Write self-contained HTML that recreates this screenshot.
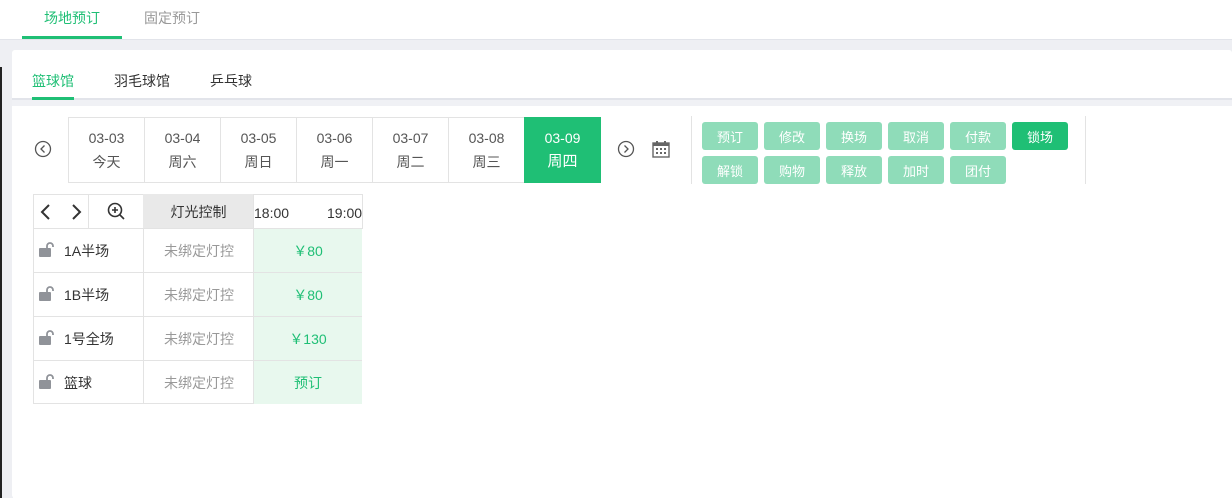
<!DOCTYPE html><html><head><meta charset="utf-8"><style>
*{margin:0;padding:0;box-sizing:border-box}
body{width:1232px;height:498px;overflow:hidden;background:#fff;font-family:"Liberation Sans","Noto Sans CJK SC",sans-serif;font-size:14px;color:#333;position:relative}
.a{position:absolute}
.c{display:flex;align-items:center;justify-content:center}
.d{border:1px solid #e3e3e3;flex-direction:column;text-align:center;line-height:24px;font-size:14px;color:#555}
.b{width:56px;height:28px;border-radius:3px;background:#8fdcb9;color:#fff;font-size:13px}
.t{border:1px solid #e3e3e3}
</style></head><body>
<div class="a" style="left:0;top:39px;width:1232px;height:459px;background:#eeeff3;border-top:1px solid #e2e4ea"></div>
<div class="a" style="left:0;top:67px;width:2px;height:431px;background:#222"></div>
<div class="a" style="left:22px;top:8px;width:100px;text-align:center;color:#1fbf75">场地预订</div>
<div class="a" style="left:22px;top:36px;width:100px;height:3px;background:#1fbf75"></div>
<div class="a" style="left:122px;top:8px;width:100px;text-align:center;color:#999">固定预订</div>
<div class="a" style="left:12px;top:50px;width:1220px;height:448px;background:#fff;border-radius:3px"></div>
<div class="a" style="left:12px;top:98px;width:1220px;height:8px;background:#f0f1f5;border-top:2px solid #e2e4ea"></div>
<div class="a" style="left:13px;top:106px;width:1219px;height:392px;background:#fff"></div>
<div class="a" style="left:32px;top:71px;color:#1fbf75">篮球馆</div>
<div class="a" style="left:32px;top:97px;width:42px;height:3px;background:#1fbf75"></div>
<div class="a" style="left:114px;top:71px">羽毛球馆</div>
<div class="a" style="left:210px;top:71px">乒乓球</div>
<svg class="a" style="left:34px;top:140px" width="18" height="18"><circle cx="9" cy="9" r="7.5" fill="none" stroke="#555" stroke-width="1.3"/><path d="M10.5 5.5L7 9l3.5 3.5" fill="none" stroke="#555" stroke-width="1.3"/></svg>
<div class="a c d" style="left:68px;top:117px;width:77px;height:66px">03-03<br>今天</div>
<div class="a c d" style="left:144px;top:117px;width:77px;height:66px">03-04<br>周六</div>
<div class="a c d" style="left:220px;top:117px;width:77px;height:66px">03-05<br>周日</div>
<div class="a c d" style="left:296px;top:117px;width:77px;height:66px">03-06<br>周一</div>
<div class="a c d" style="left:372px;top:117px;width:77px;height:66px">03-07<br>周二</div>
<div class="a c d" style="left:448px;top:117px;width:77px;height:66px">03-08<br>周三</div>
<div class="a c d" style="left:524px;top:117px;width:77px;height:66px;background:#1fbf75;color:#fff;border-color:#1fbf75">03-09<br><span style="font-size:15px">周四</span></div>
<svg class="a" style="left:617px;top:140px" width="18" height="18"><circle cx="9" cy="9" r="7.5" fill="none" stroke="#555" stroke-width="1.3"/><path d="M7.5 5.5L11 9l-3.5 3.5" fill="none" stroke="#555" stroke-width="1.3"/></svg>
<svg class="a" style="left:652px;top:140px" width="18" height="18"><rect x="1" y="3" width="16" height="14" fill="none" stroke="#666" stroke-width="1.4"/><rect x="1" y="3" width="16" height="3" fill="#666"/><rect x="4" y="1" width="2" height="4" fill="#666"/><rect x="12" y="1" width="2" height="4" fill="#666"/><g fill="#666"><rect x="4" y="8" width="2" height="2"/><rect x="8" y="8" width="2" height="2"/><rect x="12" y="8" width="2" height="2"/><rect x="4" y="12" width="2" height="2"/><rect x="8" y="12" width="2" height="2"/><rect x="12" y="12" width="2" height="2"/></g></svg>
<div class="a" style="left:691px;top:116px;width:1px;height:68px;background:#e3e3e3"></div>
<div class="a" style="left:1085px;top:116px;width:1px;height:68px;background:#e3e3e3"></div>
<div class="a c b" style="left:702px;top:122px">预订</div>
<div class="a c b" style="left:764px;top:122px">修改</div>
<div class="a c b" style="left:826px;top:122px">换场</div>
<div class="a c b" style="left:888px;top:122px">取消</div>
<div class="a c b" style="left:950px;top:122px">付款</div>
<div class="a c b" style="left:1012px;top:122px;background:#1fbf75">锁场</div>
<div class="a c b" style="left:702px;top:156px">解锁</div>
<div class="a c b" style="left:764px;top:156px">购物</div>
<div class="a c b" style="left:826px;top:156px">释放</div>
<div class="a c b" style="left:888px;top:156px">加时</div>
<div class="a c b" style="left:950px;top:156px">团付</div>
<div class="a t" style="left:33px;top:194px;width:56px;height:35px"></div>
<svg class="a" style="left:38px;top:202px" width="46" height="20"><path d="M11 3L4 10l7 7M35 3l7 7-7 7" fill="none" stroke="#333" stroke-width="2"/></svg>
<div class="a t" style="left:88px;top:194px;width:56px;height:35px"></div>
<svg class="a" style="left:106px;top:201px" width="20" height="20"><circle cx="9" cy="9" r="6.5" fill="none" stroke="#333" stroke-width="1.6"/><path d="M9 6v6M6 9h6M14 14l4 4" stroke="#333" stroke-width="1.6"/></svg>
<div class="a c t" style="left:143px;top:194px;width:111px;height:35px;background:#e9e9e9;border-color:#e9e9e9">灯光控制</div>
<div class="a t" style="left:253px;top:194px;width:110px;height:35px"></div>
<div class="a" style="left:254px;top:205px">18:00</div>
<div class="a" style="left:327px;top:205px">19:00</div>
<div class="a t" style="left:33px;top:228px;width:111px;height:176px"></div>
<div class="a t" style="left:143px;top:228px;width:111px;height:176px"></div>
<div class="a" style="left:33px;top:272px;width:329px;height:1px;background:#e3e3e3"></div>
<div class="a" style="left:33px;top:316px;width:329px;height:1px;background:#e3e3e3"></div>
<div class="a" style="left:33px;top:360px;width:329px;height:1px;background:#e3e3e3"></div>
<div class="a c" style="left:254px;top:229px;width:108px;height:43px;background:#e8f8ee;color:#1fbf75">￥80</div>
<div class="a c" style="left:254px;top:273px;width:108px;height:43px;background:#e8f8ee;color:#1fbf75">￥80</div>
<div class="a c" style="left:254px;top:317px;width:108px;height:43px;background:#e8f8ee;color:#1fbf75">￥130</div>
<div class="a c" style="left:254px;top:361px;width:108px;height:43px;background:#e8f8ee;color:#1fbf75">预订</div>
<div class="a" style="left:144px;top:241px;width:110px;text-align:center;color:#999">未绑定灯控</div>
<div class="a" style="left:144px;top:285px;width:110px;text-align:center;color:#999">未绑定灯控</div>
<div class="a" style="left:144px;top:329px;width:110px;text-align:center;color:#999">未绑定灯控</div>
<div class="a" style="left:144px;top:373px;width:110px;text-align:center;color:#999">未绑定灯控</div>
<div class="a" style="left:64px;top:241px">1A半场</div>
<div class="a" style="left:64px;top:285px">1B半场</div>
<div class="a" style="left:64px;top:329px">1号全场</div>
<div class="a" style="left:64px;top:373px">篮球</div>
<svg class="a" style="left:38px;top:241px" width="18" height="16"><path d="M9 7V5a3 3 0 0 1 6 0v1" fill="none" stroke="#909399" stroke-width="1.8"/><rect x="1" y="7" width="12" height="9" rx="1" fill="#909399"/></svg>
<svg class="a" style="left:38px;top:285px" width="18" height="16"><path d="M9 7V5a3 3 0 0 1 6 0v1" fill="none" stroke="#909399" stroke-width="1.8"/><rect x="1" y="7" width="12" height="9" rx="1" fill="#909399"/></svg>
<svg class="a" style="left:38px;top:329px" width="18" height="16"><path d="M9 7V5a3 3 0 0 1 6 0v1" fill="none" stroke="#909399" stroke-width="1.8"/><rect x="1" y="7" width="12" height="9" rx="1" fill="#909399"/></svg>
<svg class="a" style="left:38px;top:373px" width="18" height="16"><path d="M9 7V5a3 3 0 0 1 6 0v1" fill="none" stroke="#909399" stroke-width="1.8"/><rect x="1" y="7" width="12" height="9" rx="1" fill="#909399"/></svg>
</body></html>
